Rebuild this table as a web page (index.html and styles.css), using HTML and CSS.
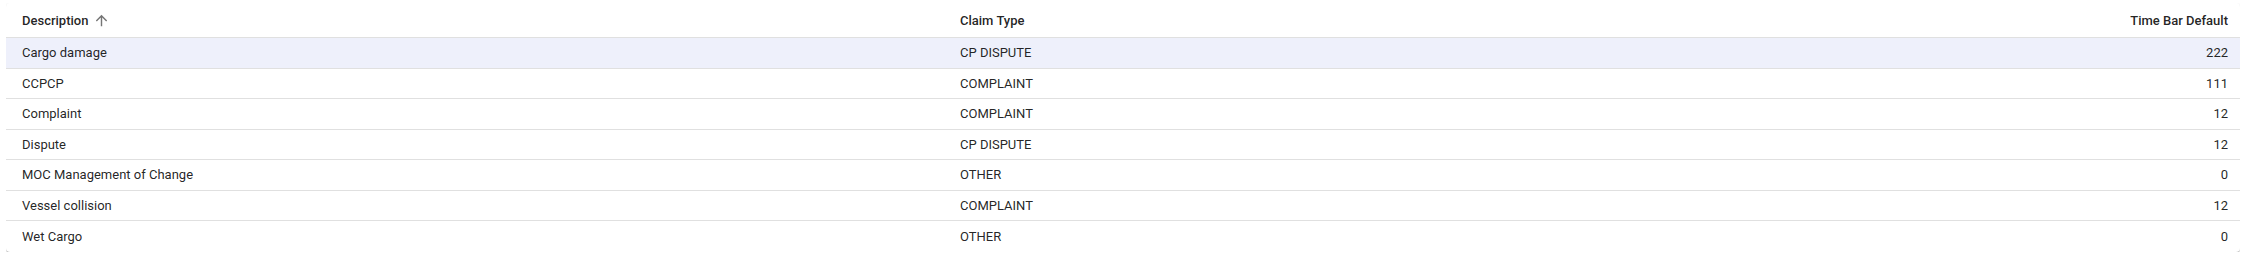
FILE: index.html
```html
<!DOCTYPE html>
<html>
<head>
<meta charset="utf-8">
<link rel="stylesheet" href="styles.css">
</head>
<body>
<div class="card">
  <div class="row head">
    <div class="cell sortable">Description
      <svg class="sort" viewBox="0 0 24 24" width="17" height="17"><path d="M4 12l1.41 1.41L11 7.83V20h2V7.83l5.58 5.59L20 12l-8-8-8 8z"/></svg>
    </div>
    <div class="cell">Claim Type</div>
    <div class="cell num">Time Bar Default</div>
  </div>
  <div class="row selected"><div class="cell">Cargo damage</div><div class="cell">CP DISPUTE</div><div class="cell num">222</div></div>
  <div class="row"><div class="cell">CCPCP</div><div class="cell">COMPLAINT</div><div class="cell num">111</div></div>
  <div class="row"><div class="cell">Complaint</div><div class="cell">COMPLAINT</div><div class="cell num">12</div></div>
  <div class="row"><div class="cell">Dispute</div><div class="cell">CP DISPUTE</div><div class="cell num">12</div></div>
  <div class="row"><div class="cell">MOC Management of Change</div><div class="cell">OTHER</div><div class="cell num">0</div></div>
  <div class="row"><div class="cell">Vessel collision</div><div class="cell">COMPLAINT</div><div class="cell num">12</div></div>
  <div class="row last"><div class="cell">Wet Cargo</div><div class="cell">OTHER</div><div class="cell num">0</div></div>
</div>
</body>
</html>
```
FILE: styles.css
```css
html, body {
  background: #ffffff;
}
body {
  margin: 3px 3px 0 6px;
  font-family: Roboto, "Liberation Sans", sans-serif;
  font-size: 13px;
  color: rgba(0, 0, 0, 0.87);
}
.card {
  background: #fff;
  border-radius: 4px;
  box-shadow: 0 2px 1px -1px rgba(0,0,0,.2), 0 1px 1px 0 rgba(0,0,0,.14), 0 1px 3px 0 rgba(0,0,0,.12);
  overflow: hidden;
}
.row {
  display: grid;
  grid-template-columns: 938px 1fr auto;
  align-items: center;
  padding: 0 12px 0 16px;
  height: 30.5px;
  box-sizing: border-box;
  border-bottom: 1px solid #e0e0e0;
}
.row.last {
  border-bottom: none;
}
.row.head {
  height: 35px;
  font-weight: 500;
  color: rgba(0, 0, 0, 0.87);
}
.row.selected {
  background: #eef0fb;
}
.cell.num {
  text-align: right;
}
.sortable {
  display: flex;
  align-items: center;
  gap: 5px;
}
.sort {
  fill: #757575;
}
```
